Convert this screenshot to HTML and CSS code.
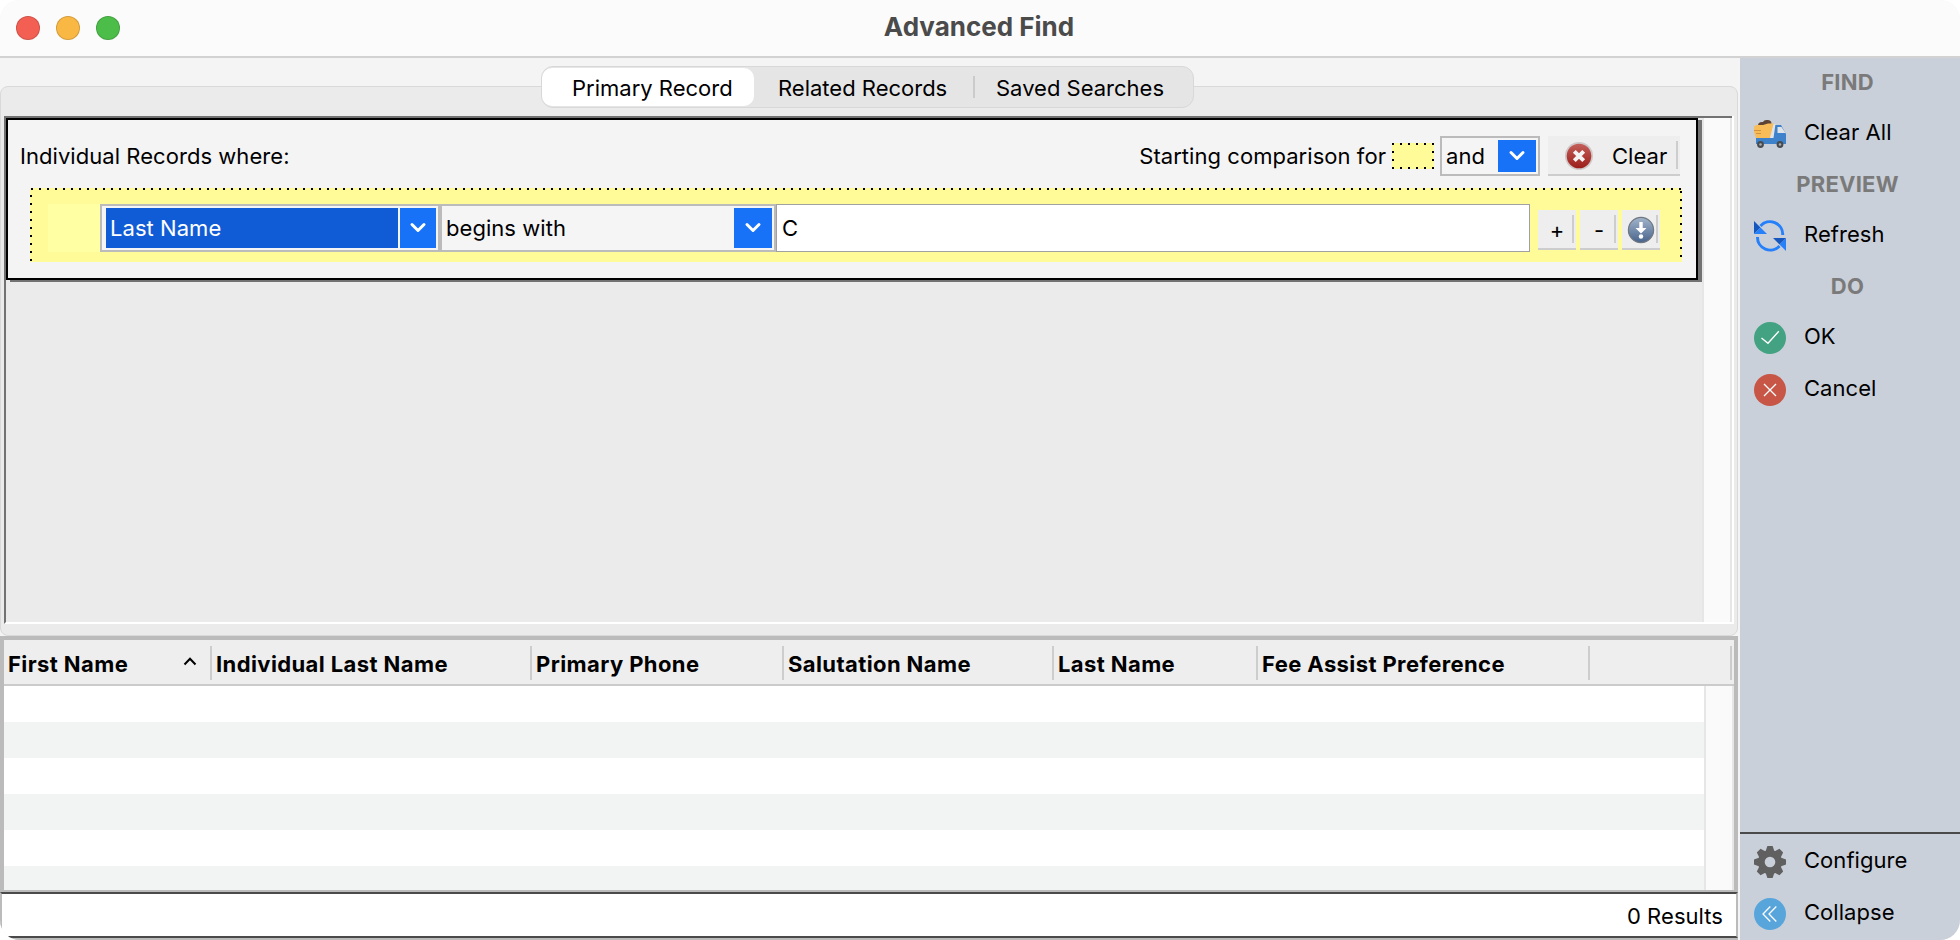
FILE: index.html
```
<!DOCTYPE html>
<html lang="en">
<head>
    <meta charset="UTF-8">
    <title>Advanced Find</title>
    <link rel="stylesheet" href="styles.css">
</head>
<body>
<div class="window">
    <!-- title bar -->
    <div class="titlebar">
        <div class="lights">
            <span class="light red"></span>
            <span class="light yellow"></span>
            <span class="light green"></span>
        </div>
        <h1>Advanced Find</h1>
    </div>

    <div class="body">
        <div class="main">
            <!-- search criteria -->
            <div class="tabpanel">
                <div class="tabs">
                    <div class="tab active">Primary Record</div>
                    <div class="tab related">Related Records</div>
                    <div class="tab-sep"></div>
                    <div class="tab saved">Saved Searches</div>
                </div>
                <div class="scrollpane">
                    <div class="viewport">
                        <div class="criteria">
                            <div class="criteria-head">
                                <span class="where">Individual Records where:</span>
                                <span>Starting comparison for</span>
                                <span class="swatch"></span>
                                <div class="combo and">
                                    <span class="value">and</span>
                                    <span class="arrow"><svg width="18" height="12" viewBox="0 0 18 12"><path d="M3 2.5l6 6 6-6"/></svg></span>
                                </div>
                                <div class="btn clear">
                                    <svg width="30" height="30" viewBox="0 0 30 30">
                                        <defs><linearGradient id="gr" x1="0" y1="0" x2="0" y2="1"><stop offset="0" stop-color="#c4605a"/><stop offset="1" stop-color="#9c1d1a"/></linearGradient></defs>
                                        <circle cx="15" cy="15" r="14" fill="#cfc8c8"/>
                                        <circle cx="15" cy="15" r="12.3" fill="url(#gr)"/>
                                        <path d="M10.300 10.300l9.400 9.400M19.700 10.300l-9.400 9.400" stroke="#f4f4f4" stroke-width="4"/>
                                    </svg>
                                    <span>Clear</span>
                                </div>
                            </div>
                            <div class="group">
                                <div class="indent"></div>
                                <div class="combo field">
                                    <span class="value">Last Name</span>
                                    <span class="arrow"><svg width="18" height="12" viewBox="0 0 18 12"><path d="M3 2.5l6 6 6-6"/></svg></span>
                                </div>
                                <div class="combo operator">
                                    <span class="value">begins with</span>
                                    <span class="arrow"><svg width="18" height="12" viewBox="0 0 18 12"><path d="M3 2.5l6 6 6-6"/></svg></span>
                                </div>
                                <div class="textfield">C</div>
                                <div class="rowbtns">
                                    <div class="btn small">+</div>
                                    <div class="btn small">-</div>
                                    <div class="btn small">
                                        <svg width="28" height="28" viewBox="0 0 28 28">
                                            <defs><linearGradient id="gb" x1="0" y1="0" x2="0" y2="1"><stop offset="0" stop-color="#a3b5cb"/><stop offset="1" stop-color="#48648c"/></linearGradient></defs>
                                            <circle cx="14" cy="14" r="12.6" fill="url(#gb)" stroke="#707780" stroke-width="1.2"/>
                                            <path d="M12.300 6h3.400v6h3.800L14 17.600 8.500 12h3.800z" fill="#fff"/>
                                            <circle cx="14" cy="20.500" r="2.200" fill="#fff"/>
                                        </svg>
                                    </div>
                                </div>
                            </div>
                        </div>
                    </div>
                    <div class="scrollbar"></div>
                </div>
            </div>

            <!-- results -->
            <div class="results">
                <div class="thead">
                    <div class="th c1"><span>First Name</span><svg class="sort" width="14" height="9" viewBox="0 0 14 9"><path d="M1.500 7.500L7 1.800l5.500 5.700"/></svg></div>
                    <div class="th c2">Individual Last Name</div>
                    <div class="th c3">Primary Phone</div>
                    <div class="th c4">Salutation Name</div>
                    <div class="th c5">Last Name</div>
                    <div class="th c6">Fee Assist Preference</div>
                    <div class="th c7"></div>
                </div>
                <div class="tbody">
                    <div class="rows"></div>
                    <div class="scrollbar"></div>
                </div>
            </div>
            <div class="status">0 Results</div>
        </div>

        <!-- actions -->
        <div class="sidebar">
            <h2>FIND</h2>
            <div class="action">
                <svg width="32" height="32" viewBox="0 0 32 32">
                    <path d="M4 7.500Q4 3.500 9 4q1-2.500 4.500-2 4 0 4 3.500l-2 2z" fill="#5e4434"/>
                    <path d="M0 14V10q0-3 3-3h6l5-1.500h6L16 20H2z" fill="#f8bd59"/>
                    <path d="M0 12.500h7M2 15.500h5" stroke="#cf9440" stroke-width="1"/>
                    <path d="M2 20h16l2-13h7l5 9v10H2z" fill="#3d82cb"/>
                    <path d="M16 20l3.500-14h2L19.500 20z" fill="#dfe4e8"/>
                    <path d="M23.500 9h4l4 6h-8z" fill="#dfe4e8"/>
                    <circle cx="6.500" cy="26.500" r="3.400" fill="#474b50"/><circle cx="6.500" cy="26.500" r="1.300" fill="#aaa"/>
                    <circle cx="26" cy="26.500" r="3.400" fill="#474b50"/><circle cx="26" cy="26.500" r="1.300" fill="#aaa"/>
                </svg>
                <span>Clear All</span>
            </div>
            <h2>PREVIEW</h2>
            <div class="action">
                <svg width="32" height="32" viewBox="0 0 32 32">
                    <path d="M6.500 6A12.700 12.700 0 0 1 28.700 15M3.500 17A12.700 12.700 0 0 0 25.500 26" fill="none" stroke="#2680fa" stroke-width="3"/>
                    <path d="M0 1v13l6.500-6.500z" fill="#1557bd"/><path d="M0 14h13L6.500 7.500z" fill="#2680fa"/>
                    <path d="M32 18v13l-6.500-6.500z" fill="#2680fa"/><path d="M32 18H19l6.500 6.500z" fill="#1557bd"/>
                </svg>
                <span>Refresh</span>
            </div>
            <h2>DO</h2>
            <div class="action">
                <svg width="32" height="32" viewBox="0 0 32 32"><circle cx="16" cy="16" r="16" fill="#43a281"/><path d="M7.500 16l6.500 5.300L24.800 9.300" fill="none" stroke="#fff" stroke-width="1.300"/></svg>
                <span>OK</span>
            </div>
            <div class="action">
                <svg width="32" height="32" viewBox="0 0 32 32"><circle cx="16" cy="16" r="16" fill="#c75646"/><path d="M10 10l12 12M22 10L10 22" stroke="#fff" stroke-width="1.300"/></svg>
                <span>Cancel</span>
            </div>
            <div class="bottom">
                <div class="action">
                    <svg width="32" height="32" viewBox="-16 -16 32 32">
                        <g fill="#606060">
                            <circle r="12"/>
                            <path id="tooth" d="M-4.500-10.500L-2.600-16h5.200l1.900 5.500z"/>
                            <use href="#tooth" transform="rotate(45)"/><use href="#tooth" transform="rotate(90)"/>
                            <use href="#tooth" transform="rotate(135)"/><use href="#tooth" transform="rotate(180)"/>
                            <use href="#tooth" transform="rotate(225)"/><use href="#tooth" transform="rotate(270)"/>
                            <use href="#tooth" transform="rotate(315)"/>
                        </g>
                        <circle r="5.300" fill="#cad0d9"/>
                    </svg>
                    <span>Configure</span>
                </div>
                <div class="action">
                    <svg width="32" height="32" viewBox="0 0 32 32"><circle cx="16" cy="16" r="16" fill="#58a5dc"/><path d="M16.300 8.500L9 16l7.300 7.500M22.300 8.500L15 16l7.300 7.500" fill="none" stroke="#fff" stroke-width="1.300"/></svg>
                    <span>Collapse</span>
                </div>
            </div>
        </div>
    </div>
</div>
</body>
</html>
```

FILE: styles.css
```
* { box-sizing: border-box; }
body { margin: 0; background: #fff; font: 22px/28px Inter, "Liberation Sans", sans-serif; letter-spacing: .05px; white-space: nowrap; color: #000; }
svg { display: block; flex: none; }

.window { width: 1960px; height: 940px; display: flex; flex-direction: column; overflow: hidden; border-radius: 20px; background: #f4f4f4; }

/* title bar */
.titlebar { height: 58px; display: grid; grid-template-columns: 120px 1fr 122px; align-items: center; background: #fbfbfb; border-bottom: 2px solid #d2d2d2; }
.lights { display: flex; gap: 16px; padding-left: 16px; }
.light { width: 24px; height: 24px; border-radius: 50%; border: 1px solid rgba(0,0,0,.15); }
.red { background: #f35f53; }
.yellow { background: #f9b744; }
.green { background: #4dbd4a; }
h1 { margin: 0; text-align: center; font-size: 26px; line-height: 32px; font-weight: 700; letter-spacing: 0; color: #4b4b4b; padding-bottom: 2px; }

.body { flex: 1; display: flex; min-height: 0; }
.main { width: 1740px; padding-top: 28px; display: flex; flex-direction: column; }

/* tabs */
.tabpanel { height: 550px; width: 1738px; border: 1px solid #d9d9d9; border-radius: 8px; background: #ebebeb; padding: 0 3px; }
.tabs { display: flex; align-items: center; width: 653px; height: 42px; margin: -21px 0 8px 537px; background: #e5e5e5; border: 1px solid #d8d8d8; border-radius: 12px; }
.tab { display: flex; align-items: center; height: 38px; padding-top: 2px; letter-spacing: 0; }
.tab.active { width: 212px; background: #fff; border-radius: 10px; padding-left: 30px; }
.tab.related { width: 219px; padding-left: 24px; }
.tab.saved { padding-left: 21px; }
.tab-sep { width: 2px; height: 22px; background: #cbcbcb; }

.scrollpane { width: 1728px; height: 508px; display: flex; border: 2px solid; border-width: 2px 0 2px 2px; border-color: #727272 #fff #fff #727272; box-shadow: 2px 0 0 #fff; }
.viewport { width: 1696px; }
.scrollbar { flex: 1; background: #fafafa; border: solid #e6e6e6; border-width: 0 2px; }

/* criteria box */
.criteria { width: 1692px; height: 162px; border: 2px solid #000; background: #f4f4f4; box-shadow: 4px 2px 0 #727272; padding: 16px 16px 0 12px; }
.criteria-head { display: flex; align-items: center; height: 40px; }
.where { margin-right: auto; }
.swatch {
    width: 42px; height: 26px; margin: 0 6px;
    background:
        repeating-linear-gradient(90deg, #000 0 2px, transparent 2px 8px) top / 100% 2px no-repeat,
        repeating-linear-gradient(90deg, #000 0 2px, transparent 2px 8px) bottom / 100% 2px no-repeat,
        repeating-linear-gradient(#000 0 2px, transparent 2px 8px) left / 2px 100% no-repeat,
        repeating-linear-gradient(#000 0 2px, transparent 2px 8px) right / 2px 100% no-repeat,
        #fffb98;
}
.combo { display: flex; align-items: center; border: 2px solid #bbb; background: #f5f5f5; padding: 2px; }
.combo .value { flex: 1; display: flex; align-items: center; height: 100%; padding-left: 2px; }
.combo .arrow { width: 38px; height: 100%; display: flex; align-items: center; justify-content: center; background: #1872f8; }
.arrow path { fill: none; stroke: #fff; stroke-width: 3; stroke-linecap: round; stroke-linejoin: round; }
.and { width: 100px; height: 40px; }
.btn { display: flex; align-items: center; background: linear-gradient(#cdcdcd, #cdcdcd) right 2px center / 2px 28px no-repeat #eee; border-bottom: 2px solid #cdcdcd; }
.clear { width: 132px; height: 40px; margin-left: 8px; padding: 1px 0 0 16px; gap: 18px; }

.group {
    display: flex; width: 1652px; height: 74px; margin: 12px 0 0 10px; padding: 16px 0 0 18px;
    background:
        repeating-linear-gradient(90deg, transparent 0 1px, #000 1px 3px, transparent 3px 8px) top left / 100% 2px no-repeat,
        repeating-linear-gradient(#000 0 2px, transparent 2px 8px) left 0 top 7px / 2px 100% no-repeat,
        repeating-linear-gradient(#000 0 2px, transparent 2px 8px) right 0 top 3px / 2px 100% no-repeat,
        #fffb98;
}
.indent { width: 52px; height: 48px; background: #ffffa3; }
.field { width: 340px; height: 48px; padding-left: 4px; }
.field .value { background: #105cd6; color: #fff; padding-left: 4px; margin-right: 2px; }
.field .arrow { width: 36px; }
.operator { width: 336px; height: 48px; }
.textfield { width: 754px; height: 48px; border: 1px solid #a0a0a0; background: #fff; padding: 9px 5px; }
.rowbtns { display: flex; gap: 4px; padding: 6px 0 0 8px; }
.small { width: 38px; height: 40px; padding-top: 1px; justify-content: center; }

/* results table */
.results { width: 1738px; height: 256px; border: 4px solid #bbb; border-bottom-width: 2px; }
.thead { display: flex; height: 46px; padding-top: 6px; background: #eee; border-bottom: 2px solid #cbcbcb; font-weight: 700; letter-spacing: .4px; }
.th { display: flex; align-items: center; justify-content: space-between; height: 34px; padding: 2px 0 0 4px; border-right: 2px solid #cdcdcd; }
.sort { margin: 0 13px 5px 0; fill: none; stroke: #000; stroke-width: 2; }
.c1 { width: 208px; }
.c2 { width: 320px; }
.c3 { width: 252px; }
.c4 { width: 270px; }
.c5 { width: 204px; }
.c6 { width: 332px; }
.c7 { width: 142px; }
.tbody { display: flex; height: 204px; }
.rows { width: 1700px; background: repeating-linear-gradient(#fff 0 36px, #f2f4f3 36px 72px); }
.status { width: 1738px; height: 46px; border: 2px solid; border-color: #4a4a4a #bbb #4a4a4a #bbb; background: #fff; display: flex; justify-content: flex-end; align-items: center; padding: 2px 13px 0 0; box-shadow: 0 2px 0 #bbb; }

/* sidebar */
.sidebar { width: 220px; background: #cad0d9; display: flex; flex-direction: column; }
.sidebar h2 { margin: 0; height: 50px; padding: 10px 5px 0 0; text-align: center; font-size: 22px; line-height: 28px; font-weight: 700; letter-spacing: .25px; color: #7a7a7a; }
.action { display: flex; align-items: center; height: 52px; padding-left: 14px; gap: 18px; }
.action span { padding-bottom: 4px; }
.bottom { margin-top: auto; height: 108px; border-top: 2px solid #4a4a4a; padding-top: 2px; }
```
